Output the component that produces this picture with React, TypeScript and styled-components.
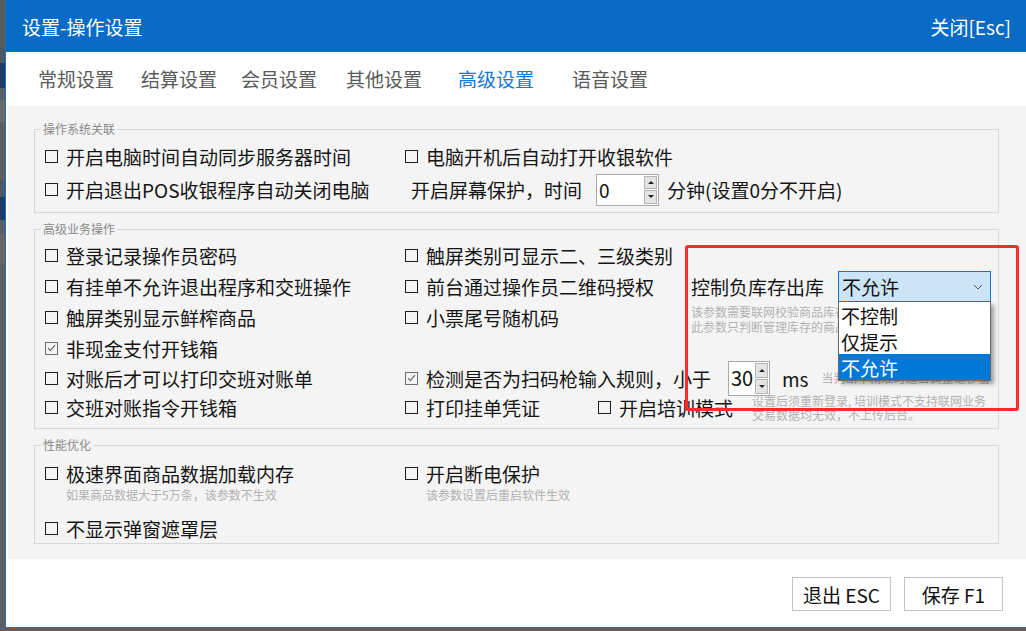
import React from 'react';
import styled, { createGlobalStyle } from 'styled-components';

const GlobalStyle = createGlobalStyle`
  html, body {
    margin: 0;
    padding: 0;
  }
  body {
    background: #5f5f5f;
    font-family: "Noto Sans CJK SC", "Microsoft YaHei", sans-serif;
    color: #1a1a1a;
  }
`;

const backdrop = [
  { h: 48, c: '#5b5b5b' },
  { h: 15, c: '#4d5865' },
  { h: 25, c: '#1d3c61' },
  { h: 12, c: '#5a5f66' },
  { h: 22, c: '#6a6a6a' },
  { h: 58, c: '#5e5e5e' },
  { h: 17, c: '#4d5865' },
  { h: 23, c: '#1d3c61' },
  { h: 14, c: '#5a5f66' },
  { h: 30, c: '#6a6464' },
  { h: 367, c: '#5f5f5f' },
];

const tabs = [
  { label: '常规设置', w: 103 },
  { label: '结算设置', w: 100 },
  { label: '会员设置', w: 105 },
  { label: '其他设置', w: 112 },
  { label: '高级设置', w: 114, active: true },
  { label: '语音设置', w: 90 },
];

const stockOptions = ['不控制', '仅提示', '不允许'];

const Desktop = styled.div`
  display: flex;
  width: 1026px;
  height: 631px;
  background: #5f5f5f;
  overflow: hidden;
`;

const Backdrop = styled.div`
  width: 5px;
  flex-shrink: 0;
  display: flex;
  flex-direction: column;
`;

const BackdropBlock = styled.div<{ $h: number; $c: string }>`
  flex-shrink: 0;
  height: ${p => p.$h}px;
  background: ${p => p.$c};
`;

const Window = styled.div`
  position: relative;
  flex: 1;
  height: 628px;
  box-sizing: border-box;
  display: flex;
  flex-direction: column;
  background: #fff;
  border-left: 1px solid #1f6fc2;
  border-bottom: 1px solid #1f6fc2;
`;

const TitleBar = styled.div`
  height: 52px;
  flex-shrink: 0;
  display: flex;
  align-items: center;
  justify-content: space-between;
  padding: 0 15px 0 16px;
  background: #0a6bc6;
  color: #fff;
  font-size: 19px;
  line-height: 1;
`;

const TabBar = styled.div`
  height: 54px;
  flex-shrink: 0;
  display: flex;
  align-items: center;
  padding-left: 32px;
  padding-bottom: 2px;
  box-sizing: border-box;
`;

const Tab = styled.div<{ $w: number; $active?: boolean }>`
  width: ${p => p.$w}px;
  flex-shrink: 0;
  font-size: 19px;
  line-height: 1;
  color: ${p => (p.$active ? '#1479d4' : '#5a5a5a')};
`;

const Content = styled.div`
  flex-shrink: 0;
  margin-left: 2px;
  padding: 16px 27px 15px 26px;
  background: #f4f4f4;
  display: flex;
  flex-direction: column;
  gap: 9px;
`;

const Group = styled.fieldset`
  margin: 0;
  padding: 0;
  min-width: 0;
  border: 1px solid #d9d9d9;
`;

const Legend = styled.legend`
  margin-left: 6px;
  padding: 0 2px;
  font-size: 12px;
  line-height: 14px;
  color: #8a8a8a;
`;

const Grid = styled.div<{ $cols: string; $rows: string; $pad: string }>`
  display: grid;
  grid-template-columns: ${p => p.$cols};
  grid-template-rows: ${p => p.$rows};
  padding: ${p => p.$pad};
`;

const Cell = styled.div<{ $col?: string; $row?: string }>`
  display: flex;
  align-items: center;
  min-width: 0;
  white-space: nowrap;
  ${p => (p.$col ? `grid-column: ${p.$col};` : '')}
  ${p => (p.$row ? `grid-row: ${p.$row};` : '')}
`;

const Stack = styled.div<{ $mt?: number }>`
  display: flex;
  flex-direction: column;
  margin-top: ${p => p.$mt ?? 0}px;
`;

const CheckLabel = styled.label<{ $h?: number; $ml?: number }>`
  display: flex;
  align-items: center;
  gap: 8px;
  height: ${p => p.$h ?? 31}px;
  margin-left: ${p => p.$ml ?? 0}px;
  font-size: 19px;
  line-height: 1;
  white-space: nowrap;
  color: #141414;
`;

const Box = styled.span<{ $checked?: boolean }>`
  width: 13px;
  height: 13px;
  flex-shrink: 0;
  box-sizing: border-box;
  border: 1px solid ${p => (p.$checked ? '#6e6e6e' : '#1e1e1e')};
  display: flex;
  align-items: center;
  justify-content: center;
`;

const Text = styled.span<{ $ml?: number; $size?: number }>`
  margin-left: ${p => p.$ml ?? 0}px;
  font-size: ${p => p.$size ?? 19}px;
  line-height: 1;
  color: #141414;
  white-space: nowrap;
`;

const Hint = styled.div<{ $ml?: number; $lh?: number }>`
  margin-left: ${p => p.$ml ?? 0}px;
  font-size: 12px;
  line-height: ${p => p.$lh ?? 16}px;
  color: #b2b2b2;
  white-space: nowrap;
`;

const SpinBox = styled.div<{ $w: number; $h: number; $ml?: number }>`
  width: ${p => p.$w}px;
  height: ${p => p.$h}px;
  margin-left: ${p => p.$ml ?? 0}px;
  flex-shrink: 0;
  box-sizing: border-box;
  display: flex;
  align-items: stretch;
  border: 1px solid #a9a9a9;
  background: #fff;
`;

const SpinValue = styled.span<{ $size: number }>`
  flex: 1;
  display: flex;
  align-items: center;
  padding-left: 2px;
  font-size: ${p => p.$size}px;
  line-height: 1;
  color: #111;
`;

const SpinButtons = styled.div`
  display: flex;
  flex-direction: column;
  gap: 1px;
  padding: 1px 1px 1px 0;
`;

const SpinButton = styled.div`
  flex: 1;
  width: 13px;
  box-sizing: border-box;
  border: 1px solid #b5b5b5;
  background: #e4e4e4;
  display: flex;
  align-items: center;
  justify-content: center;
`;

const Arrow = styled.span<{ $up?: boolean }>`
  width: 0;
  height: 0;
  border-left: 3px solid transparent;
  border-right: 3px solid transparent;
  ${p => (p.$up ? 'border-bottom: 3px solid #222;' : 'border-top: 3px solid #222;')}
`;

const SelectWrap = styled.div`
  position: relative;
  margin-left: 14px;
  width: 153px;
`;

const SelectBox = styled.div`
  height: 31px;
  box-sizing: border-box;
  display: flex;
  align-items: center;
  justify-content: space-between;
  padding: 0 7px 0 3px;
  border: 1px solid #0a74d2;
  background: #cce4f7;
  font-size: 19px;
  line-height: 1;
  color: #111;
`;

const DropList = styled.div`
  position: absolute;
  top: 100%;
  left: 0;
  width: 100%;
  z-index: 3;
  box-sizing: border-box;
  background: #fff;
  border: 1px solid #6b6b6b;
  border-top: none;
  box-shadow: 3px 3px 4px rgba(0, 0, 0, 0.35);
`;

const DropItem = styled.div<{ $active?: boolean }>`
  height: 26px;
  display: flex;
  align-items: center;
  padding-left: 2px;
  font-size: 19px;
  line-height: 1;
  background: ${p => (p.$active ? '#0078d7' : '#fff')};
  color: ${p => (p.$active ? '#fff' : '#111')};
`;

const StockPanel = styled.div`
  grid-column: 3;
  grid-row: 2 / 5;
  display: flex;
  flex-direction: column;
`;

const StockLine = styled.div`
  height: 31px;
  display: flex;
  align-items: center;
`;

const StockHints = styled.div`
  margin-top: 2px;
`;

const Footer = styled.div`
  flex: 1;
  display: flex;
  justify-content: flex-end;
  align-items: flex-start;
  gap: 13px;
  padding: 18px 23px 0 0;
`;

const Button = styled.button`
  width: 99px;
  height: 34px;
  box-sizing: border-box;
  border: 1px solid #c4c4c4;
  background: #fff;
  font-family: inherit;
  font-size: 19px;
  line-height: 1;
  color: #111;
  padding: 0;
`;

const Annotation = styled.div`
  position: absolute;
  left: 679px;
  top: 245px;
  width: 334px;
  height: 166px;
  box-sizing: border-box;
  border: 3px solid #ff2b2b;
  border-radius: 3px;
  pointer-events: none;
  z-index: 5;
`;

const Check = ({
  label,
  checked,
  h,
  ml,
}: {
  label: string;
  checked?: boolean;
  h?: number;
  ml?: number;
}) => (
  <CheckLabel $h={h} $ml={ml}>
    <Box $checked={checked}>
      {checked && (
        <svg width="9" height="8" viewBox="0 0 9 8">
          <path d="M1 4.2 L3.4 6.6 L8 1.2" fill="none" stroke="#6a6a6a" strokeWidth="1.2" />
        </svg>
      )}
    </Box>
    {label}
  </CheckLabel>
);

const Spinner = ({ value, w, h, size, ml }: { value: string; w: number; h: number; size: number; ml?: number }) => (
  <SpinBox $w={w} $h={h} $ml={ml}>
    <SpinValue $size={size}>{value}</SpinValue>
    <SpinButtons>
      <SpinButton>
        <Arrow $up />
      </SpinButton>
      <SpinButton>
        <Arrow />
      </SpinButton>
    </SpinButtons>
  </SpinBox>
);

export default function App() {
  return (
    <>
      <GlobalStyle />
      <Desktop>
        <Backdrop>
          {backdrop.map((b, i) => (
            <BackdropBlock key={i} $h={b.h} $c={b.c} />
          ))}
        </Backdrop>
        <Window>
          <TitleBar>
            <span>设置-操作设置</span>
            <span>关闭[Esc]</span>
          </TitleBar>
          <TabBar>
            {tabs.map(t => (
              <Tab key={t.label} $w={t.w} $active={t.active}>
                {t.label}
              </Tab>
            ))}
          </TabBar>

          <Content>
            <Group>
              <Legend>操作系统关联</Legend>
              <Grid $cols="360px 1fr" $rows="33px 33px" $pad="4px 0 6px 10px">
                <Cell>
                  <Check label="开启电脑时间自动同步服务器时间" h={33} />
                </Cell>
                <Cell>
                  <Check label="电脑开机后自动打开收银软件" h={33} />
                </Cell>
                <Cell>
                  <Check label="开启退出POS收银程序自动关闭电脑" h={33} />
                </Cell>
                <Cell>
                  <Text $ml={6}>开启屏幕保护，时间</Text>
                  <Spinner value="0" w={63} h={32} size={19} ml={14} />
                  <Text $ml={8}>分钟(设置0分不开启)</Text>
                </Cell>
              </Grid>
            </Group>

            <Group>
              <Legend>高级业务操作</Legend>
              <Grid
                $cols="360px 286px 1fr"
                $rows="31px 31px 31px 30px 30px 29px"
                $pad="4px 0 6px 10px"
              >
                <Cell $col="1" $row="1">
                  <Check label="登录记录操作员密码" />
                </Cell>
                <Cell $col="1" $row="2">
                  <Check label="有挂单不允许退出程序和交班操作" />
                </Cell>
                <Cell $col="1" $row="3">
                  <Check label="触屏类别显示鲜榨商品" />
                </Cell>
                <Cell $col="1" $row="4">
                  <Check label="非现金支付开钱箱" checked h={30} />
                </Cell>
                <Cell $col="1" $row="5">
                  <Check label="对账后才可以打印交班对账单" h={30} />
                </Cell>
                <Cell $col="1" $row="6">
                  <Check label="交班对账指令开钱箱" h={29} />
                </Cell>

                <Cell $col="2" $row="1">
                  <Check label="触屏类别可显示二、三级类别" />
                </Cell>
                <Cell $col="2" $row="2">
                  <Check label="前台通过操作员二维码授权" />
                </Cell>
                <Cell $col="2" $row="3">
                  <Check label="小票尾号随机码" />
                </Cell>

                <StockPanel>
                  <StockLine>
                    <Text>控制负库存出库</Text>
                    <SelectWrap>
                      <SelectBox>
                        <span>不允许</span>
                        <svg width="10" height="6" viewBox="0 0 10 6">
                          <path d="M1 1 L5 5 L9 1" fill="none" stroke="#555" strokeWidth="1" />
                        </svg>
                      </SelectBox>
                      <DropList>
                        {stockOptions.map(o => (
                          <DropItem key={o} $active={o === '不允许'}>
                            {o}
                          </DropItem>
                        ))}
                      </DropList>
                    </SelectWrap>
                  </StockLine>
                  <StockHints>
                    <Hint $lh={15}>该参数需要联网校验商品库存，请保持网络畅通</Hint>
                    <Hint $lh={15}>此参数只判断管理库存的商品，其余不受限</Hint>
                  </StockHints>
                </StockPanel>

                <Cell $col="2 / 4" $row="5">
                  <Check label="检测是否为扫码枪输入规则，小于" checked h={30} />
                  <Spinner value="30" w={42} h={35} size={20} ml={17} />
                  <Text $ml={12}>ms</Text>
                  <Hint $ml={13}>当判断不精准时适当调整毫秒值</Hint>
                </Cell>
                <Cell $col="2 / 4" $row="6">
                  <Check label="打印挂单凭证" h={29} />
                  <Check label="开启培训模式" h={29} ml={58} />
                  <Stack>
                    <Hint $ml={19} $lh={14}>设置后须重新登录, 培训模式不支持联网业务</Hint>
                    <Hint $ml={19} $lh={14}>交易数据均无效，不上传后台。</Hint>
                  </Stack>
                </Cell>
              </Grid>
            </Group>

            <Group>
              <Legend>性能优化</Legend>
              <Grid $cols="360px 1fr" $rows="auto auto" $pad="7px 0 1px 10px">
                <Stack>
                  <Check label="极速界面商品数据加载内存" h={28} />
                  <Hint $ml={21}>如果商品数据大于5万条，该参数不生效</Hint>
                </Stack>
                <Stack>
                  <Check label="开启断电保护" h={28} />
                  <Hint $ml={21}>该参数设置后重启软件生效</Hint>
                </Stack>
                <Stack $mt={11}>
                  <Check label="不显示弹窗遮罩层" h={28} />
                </Stack>
              </Grid>
            </Group>
          </Content>

          <Footer>
            <Button>退出 ESC</Button>
            <Button>保存 F1</Button>
          </Footer>

          <Annotation />
        </Window>
      </Desktop>
    </>
  );
}
